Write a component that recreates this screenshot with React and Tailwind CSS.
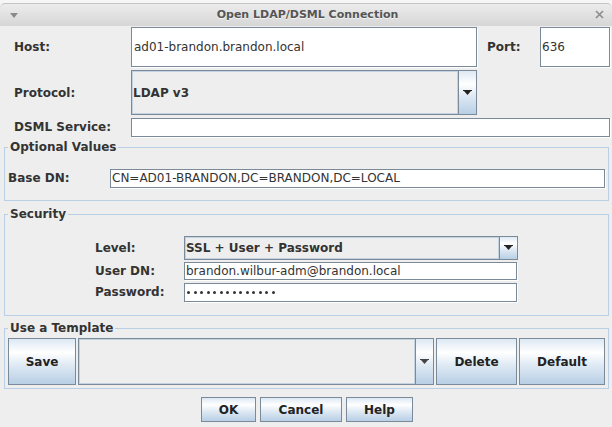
const grad = 'bg-[linear-gradient(to_bottom,#dde8f3_0%,#ffffff_30%,#dde8f3_60%,#b8cfe5_100%)]';

function Arrow({ color = '#222' }) {
  return (
    <svg width="9" height="5" viewBox="0 0 9 5">
      <path d="M0 0H9V1H8L4.5 5L1 1H0Z" fill={color} />
    </svg>
  );
}

function Field({ className, children }) {
  return (
    <div className={`flex items-center border border-[#7a8a99] bg-white pl-[1px] text-[12px] text-[#333] shadow-[1px_1px_0_#ffffff] ${className}`}>
      {children}
    </div>
  );
}

function Combo({ className, bold, children, arrowColor }) {
  return (
    <div className={`flex border border-[#7a8a99] ${className}`}>
      <div className={`flex flex-1 items-center bg-[#eeeeee] pl-[1px] text-[12px] text-[#333] shadow-[inset_0_0_0_1px_#c4d3e2] ${bold ? 'font-bold' : ''}`}>
        {children}
      </div>
      <div className={`flex w-[18px] items-center justify-center border-l border-[#7a8a99] ${grad}`}>
        <Arrow color={arrowColor} />
      </div>
    </div>
  );
}

function Button({ className, children }) {
  return (
    <div className={`flex items-center justify-center border border-[#7a8a99] text-[12px] font-bold text-[#222] ${grad} ${className}`}>
      {children}
    </div>
  );
}

function Group({ title, className, children }) {
  return (
    <fieldset className={`ml-[4px] mr-[3px] border border-[#b8cfe5] ${className}`}>
      <legend className="ml-[3px] px-[2px] text-[12px] font-bold leading-[14px] text-[#333]">{title}</legend>
      {children}
    </fieldset>
  );
}

const dots = Array.from({ length: 14 }, (_, i) => i);

export default function App() {
  return (
    <div className="flex h-[427px] w-[612px] flex-col overflow-hidden bg-[#eeeeee] font-['DejaVu_Sans',sans-serif] text-[#333]">
      {/* title bar */}
      <div className="bg-[#f6f6f6] pt-[3px]">
        <div className="relative flex h-[23px] items-center justify-center rounded-t-[5px] border-t border-[#c4c4c4] bg-[linear-gradient(to_bottom,#ececec,#d6d6d6)]">
          <div className="absolute left-[10px] top-[9px]">
            <svg width="8" height="5" viewBox="0 0 8 5"><path d="M0 0H8L4 5Z" fill="#8a8a8a" /></svg>
          </div>
          <span className="pl-[3px] text-[11px] font-bold text-[#555] [text-shadow:0_1px_0_#f4f4f4]">Open LDAP/DSML Connection</span>
          <div className="absolute right-[8px] top-[6px]">
            <svg width="9" height="9" viewBox="0 0 9 9"><path d="M1 1L8 8M8 1L1 8" stroke="#8c8c8c" strokeWidth="1.6" /></svg>
          </div>
        </div>
      </div>

      {/* host / port */}
      <div className="mt-[1px] flex h-[40px] items-center">
        <div className="w-[131px] pl-[14px] text-[12px] font-bold">Host:</div>
        <Field className="h-[40px] w-[346px] pl-[2px]">ad01-brandon.brandon.local</Field>
        <div className="ml-[10px] w-[53px] text-[12px] font-bold">Port:</div>
        <Field className="h-[40px] w-[70px]">636</Field>
      </div>

      {/* protocol */}
      <div className="mt-[3px] flex h-[45px] items-center">
        <div className="w-[131px] pl-[14px] text-[12px] font-bold">Protocol:</div>
        <Combo className="h-[45px] w-[346px]" bold>LDAP v3</Combo>
      </div>

      {/* dsml */}
      <div className="mt-[3px] flex h-[18px] items-center">
        <div className="w-[131px] pl-[14px] text-[12px] font-bold">DSML Service:</div>
        <Field className="h-[19px] w-[479px]" />
      </div>

      <Group title="Optional Values" className="mt-[4px] pb-[13px] pt-[15px]">
        <div className="flex h-[18px] items-center pl-[3px]">
          <div className="w-[102px] text-[12px] font-bold">Base DN:</div>
          <Field className="h-[19px] w-[495px]">CN=AD01-BRANDON,DC=BRANDON,DC=LOCAL</Field>
        </div>
      </Group>

      <Group title="Security" className="mt-[6px] pb-[14px] pt-[15px]">
        <div className="flex flex-col gap-[3px] pl-[90px]">
          <div className="flex h-[23px] items-center">
            <div className="w-[89px] text-[12px] font-bold">Level:</div>
            <Combo className="h-[24px] w-[334px]" bold>SSL + User + Password</Combo>
          </div>
          <div className="flex h-[18px] items-center">
            <div className="w-[89px] text-[12px] font-bold">User DN:</div>
            <Field className="h-[18px] w-[333px]">brandon.wilbur-adm@brandon.local</Field>
          </div>
          <div className="flex h-[18px] items-center">
            <div className="w-[89px] text-[12px] font-bold">Password:</div>
            <Field className="h-[19px] w-[333px] gap-[3.5px] pl-[2px] pt-[1px]">
              {dots.map((i) => (
                <span key={i} className="h-[3px] w-[3px] rounded-full bg-[#333]" />
              ))}
            </Field>
          </div>
        </div>
      </Group>

      <Group title="Use a Template" className="mt-[5px] pb-[3px] pt-[3px]">
        <div className="flex h-[47px] gap-[2px] pl-[3px]">
          <Button className="w-[68px]">Save</Button>
          <Combo className="w-[356px]" arrowColor="#444" />
          <Button className="w-[81px]">Delete</Button>
          <Button className="w-[86px]">Default</Button>
        </div>
      </Group>

      <div className="mt-[8px] flex h-[25px] pl-[201px]">
        <Button className="w-[55px]">OK</Button>
        <Button className="ml-[4px] w-[82px]">Cancel</Button>
        <Button className="ml-[4px] w-[67px]">Help</Button>
      </div>
    </div>
  );
}
